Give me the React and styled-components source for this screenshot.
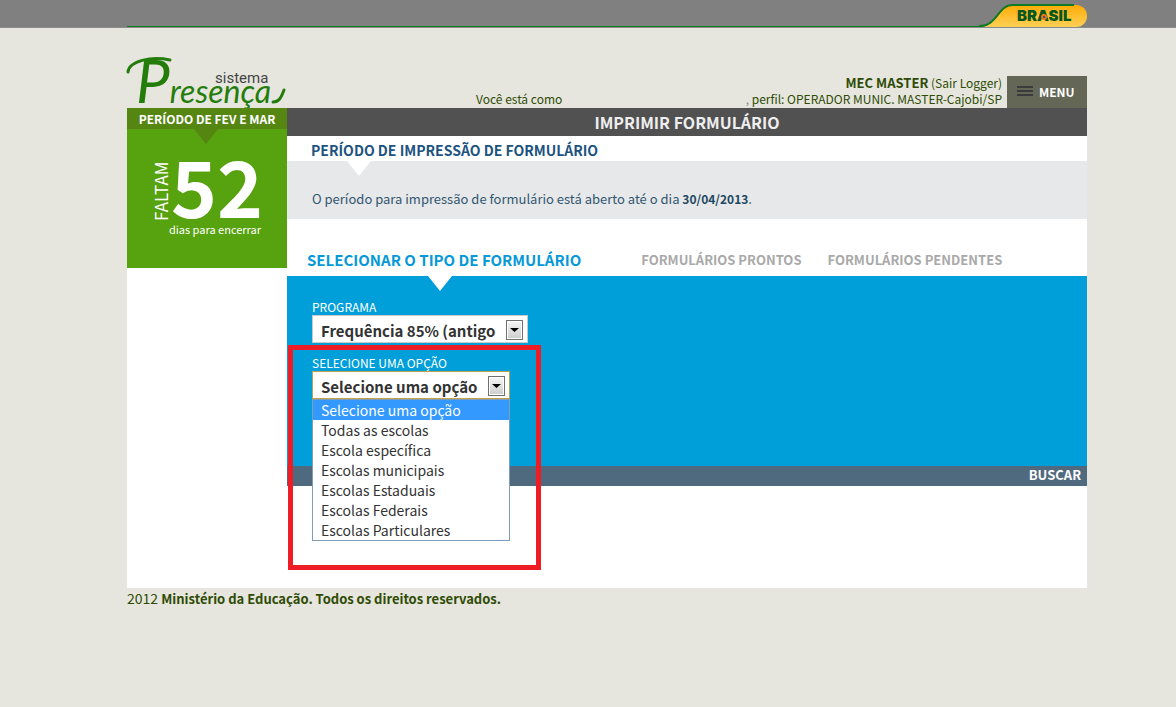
import { useState } from "react";
import styled, { createGlobalStyle } from "styled-components";

const options = [
    "Selecione uma opção",
    "Todas as escolas",
    "Escola específica",
    "Escolas municipais",
    "Escolas Estaduais",
    "Escolas Federais",
    "Escolas Particulares",
];

const GlobalStyle = createGlobalStyle`
    * {
        box-sizing: border-box;
    }
    body {
        margin: 0;
        background: #e6e6de;
        color: #2f4b05;
        font-family: "Noto Sans CJK JP", "Open Sans", sans-serif;
        font-size: 12px;
        line-height: 16px;
    }
    a {
        color: inherit;
        text-decoration: none;
    }
    button, select {
        font-family: inherit;
    }
`;

export default function App() {
    const [program, setProgram] = useState("Frequência 85% (antigo");
    const [option, setOption] = useState(options[0]);

    return (
        <>
            <GlobalStyle />
            <TopBar>
                <TopLine>
                    <BrasilBadge />
                </TopLine>
            </TopBar>
            <Page>
                <Header>
                    <Logo />
                    <Session>
                        <span>Você está como</span>
                        <User>
                            <div><strong>MEC MASTER</strong> <a href="#sair">(Sair Logger)</a></div>
                            <div><Comma>,</Comma> perfil: OPERADOR MUNIC. MASTER-Cajobi/SP</div>
                        </User>
                    </Session>
                    <MenuButton type="button">
                        <MenuIcon viewBox="0 0 16 10" aria-hidden="true">
                            <path d="M0 1h16M0 5h16M0 9h16" stroke="#3b3b3b" strokeWidth="2" />
                        </MenuIcon>
                        MENU
                    </MenuButton>
                </Header>
                <Body>
                    <Countdown>
                        <CountdownTitle>PERÍODO DE FEV E MAR</CountdownTitle>
                        <CountdownBox>
                            <Pointer $left={67} $color="#568612" />
                            <Counter>
                                <Remaining>FALTAM</Remaining>
                                <Days>52</Days>
                            </Counter>
                            <CounterNote>dias para encerrar</CounterNote>
                        </CountdownBox>
                    </Countdown>
                    <Main>
                        <PageTitle>IMPRIMIR FORMULÁRIO</PageTitle>
                        <PeriodTitle>PERÍODO DE IMPRESSÃO DE FORMULÁRIO</PeriodTitle>
                        <PeriodText>
                            <Pointer $left={60} $color="#fff" />
                            O período para impressão de formulário está aberto até o dia <strong>30/04/2013</strong>.
                        </PeriodText>
                        <Tabs>
                            <Tab href="#tipo" $active>SELECIONAR O TIPO DE FORMULÁRIO</Tab>
                            <Tab href="#prontos">FORMULÁRIOS PRONTOS</Tab>
                            <Tab href="#pendentes">FORMULÁRIOS PENDENTES</Tab>
                        </Tabs>
                        <Form onSubmit={(e) => e.preventDefault()}>
                            <Fields>
                                <Pointer $left={141} $color="#fff" />
                                <Field>
                                    <Label htmlFor="programa">PROGRAMA</Label>
                                    <SelectBox $width={216}>
                                        <Select id="programa" value={program} onChange={(e) => setProgram(e.target.value)}>
                                            <option>Frequência 85% (antigo</option>
                                        </Select>
                                        <SelectArrow />
                                    </SelectBox>
                                </Field>
                                <Field>
                                    <Highlight />
                                    <Label htmlFor="opcao">SELECIONE UMA OPÇÃO</Label>
                                    <SelectBox $width={198}>
                                        <Select id="opcao" $open value={option} onChange={(e) => setOption(e.target.value)}>
                                            {options.map((item) => <option key={item}>{item}</option>)}
                                        </Select>
                                        <SelectArrow />
                                        <OptionList role="listbox" aria-label="Selecione uma opção">
                                            {options.map((item) => (
                                                <Option
                                                    key={item}
                                                    role="option"
                                                    aria-selected={item === option}
                                                    $selected={item === option}
                                                    onClick={() => setOption(item)}
                                                >
                                                    {item}
                                                </Option>
                                            ))}
                                        </OptionList>
                                    </SelectBox>
                                </Field>
                            </Fields>
                            <Actions>
                                <SearchButton type="submit">BUSCAR</SearchButton>
                            </Actions>
                        </Form>
                    </Main>
                </Body>
                <Footer>
                    2012 <strong>Ministério da Educação. Todos os direitos reservados.</strong>
                </Footer>
            </Page>
        </>
    )
}

function BrasilBadge() {
    return (
        <BadgeSvg viewBox="0 0 108 24" role="img" aria-label="Brasil">
            <defs>
                <linearGradient id="gold" x1="0" y1="0" x2="0" y2="1">
                    <stop offset="0" stopColor="#fdab05" />
                    <stop offset="1" stopColor="#ffd057" />
                </linearGradient>
            </defs>
            <path d="M4 24C17 22 20 3 33 2H97C104 2 108 7 108 13S104 24 97 24Z" fill="url(#gold)" />
            <path d="M0 23C18 24 19 2 33 2H95" fill="none" stroke="#0b7a22" strokeWidth="2" />
            <text x="38" y="18" fontFamily="Inter, sans-serif" fontWeight="900" fontSize="15" fill="#07561d">BRASIL</text>
            <circle cx="65" cy="14" r="3" fill="#e8731c" />
            <circle cx="65" cy="14" r="1" fill="#174b9a" />
        </BadgeSvg>
    )
}

function Logo() {
    return (
        <LogoSvg viewBox="0 0 160 56" role="img" aria-label="Sistema Presença">
            <text x="88" y="31" fontFamily="Roboto, sans-serif" fontSize="15" fill="#444">sistema</text>
            <path d="M1 20C2 9 24 4 43 8" fill="none" stroke="#247d0b" strokeWidth="3" strokeLinecap="round" />
            <text x="9" y="51" fontFamily="Lato, sans-serif" fontStyle="italic" fill="#247d0b">
                <tspan fontSize="60">P</tspan>
                <tspan fontSize="32">resença</tspan>
            </text>
            <path d="M146 50C152 50 154 46 157 38" fill="none" stroke="#247d0b" strokeWidth="3" strokeLinecap="round" />
        </LogoSvg>
    )
}

function SelectArrow() {
    return (
        <ArrowBox viewBox="0 0 17 20" aria-hidden="true">
            <defs>
                <linearGradient id="arrowFill" x1="0" y1="0" x2="0" y2="1">
                    <stop offset="0" stopColor="#f4f4f4" />
                    <stop offset="1" stopColor="#cfcfcf" />
                </linearGradient>
            </defs>
            <rect x="0.500" y="0.500" width="16" height="19" fill="#fff" stroke="#707070" />
            <rect x="2" y="2" width="13" height="16" fill="url(#arrowFill)" />
            <path d="M4 8h9l-4.500 4z" fill="#000" />
        </ArrowBox>
    )
}

const TopBar = styled.div`
    height: 28px;
    padding: 0 89px 0 127px;
    background: #808080;
    border-bottom: 1px solid #8c8c8a;
`;
const TopLine = styled.div`
    display: flex;
    justify-content: flex-end;
    align-items: flex-end;
    height: 27px;
    background: linear-gradient(#0b7a22, #0b7a22) left bottom / calc(100% - 104px) 1px no-repeat;
`;
const BadgeSvg = styled.svg`
    display: block;
    width: 108px;
    height: 24px;
`;
const Page = styled.div`
    padding: 0 89px 0 127px;
`;
const Header = styled.header`
    display: flex;
    align-items: flex-end;
    height: 80px;
`;
const LogoSvg = styled.svg`
    flex: none;
    width: 160px;
    height: 56px;
    overflow: visible;
`;
const Session = styled.div`
    flex: 1;
    display: flex;
    align-items: flex-end;
    justify-content: space-between;
    padding: 0 5px 1px 189px;
`;
const User = styled.div`
    text-align: right;
    strong {
        font-size: 13px;
    }
`;
const Comma = styled.span`
    color: #7d8a96;
`;
const MenuButton = styled.button`
    display: flex;
    align-items: center;
    gap: 6px;
    width: 80px;
    height: 32px;
    padding: 0 0 2px 10px;
    border: 0;
    background: #646656;
    color: #fff;
    font-size: 12px;
    font-weight: bold;
    cursor: pointer;
`;
const MenuIcon = styled.svg`
    width: 16px;
    height: 10px;
`;
const Body = styled.div`
    display: grid;
    grid-template-columns: 160px 1fr;
    align-items: start;
    padding-bottom: 102px;
    background: #fff;
`;

const Countdown = styled.aside`
    color: #fff;
`;
const CountdownTitle = styled.h2`
    margin: 0;
    background: #568612;
    font-size: 12px;
    line-height: 21px;
    text-align: center;
`;
const CountdownBox = styled.div`
    position: relative;
    height: 139px;
    padding-top: 32px;
    background: #57a20f;
`;
const Counter = styled.div`
    display: flex;
    justify-content: center;
    height: 60px;
`;
const Remaining = styled.span`
    writing-mode: vertical-rl;
    transform: rotate(180deg);
    font-size: 17px;
    line-height: 20px;
    text-align: center;
`;
const Days = styled.span`
    font-size: 78px;
    font-weight: bold;
    line-height: 46px;
`;
const CounterNote = styled.div`
    padding-left: 16px;
    font-size: 11px;
    text-align: center;
`;
const Pointer = styled.span`
    position: absolute;
    top: 0;
    left: ${({ $left }) => $left}px;
    border: 12px solid transparent;
    border-top: 15px solid ${({ $color }) => $color};
    border-bottom: 0;
`;

const Main = styled.main`
    min-width: 0;
`;
const PageTitle = styled.h1`
    margin: 0;
    background: #515151;
    color: #eee;
    font-size: 16px;
    line-height: 28px;
    text-align: center;
`;
const PeriodTitle = styled.h2`
    margin: 0;
    padding: 4px 24px 0;
    color: #1d5380;
    font-size: 14px;
    line-height: 21px;
`;
const PeriodText = styled.p`
    position: relative;
    margin: 0;
    padding: 30px 25px 12px;
    background: #e7e8ea;
    color: #31566f;
    font-size: 13px;
    line-height: 16px;
    strong {
        color: #1f4862;
        font-size: 12px;
    }
`;
const Tabs = styled.nav`
    display: flex;
    align-items: center;
    gap: 26px;
    height: 57px;
    padding: 24px 20px 0;
`;
const Tab = styled.a`
    margin-right: ${({ $active }) => ($active ? 34 : 0)}px;
    color: ${({ $active }) => ($active ? "#0799d7" : "#a9a9a9")};
    font-size: ${({ $active }) => ($active ? 15 : 13)}px;
    font-weight: bold;
`;
const Form = styled.form`
    margin: 0;
`;
const Fields = styled.div`
    position: relative;
    display: flex;
    flex-direction: column;
    gap: 12px;
    min-height: 190px;
    padding: 23px 25px;
    background: #009fda;
`;
const Field = styled.div`
    position: relative;
`;
const Label = styled.label`
    display: block;
    color: #fff;
    font-size: 12px;
    line-height: 16px;
`;
const SelectBox = styled.div`
    position: relative;
    width: ${({ $width }) => $width}px;
`;
const Select = styled.select`
    display: block;
    width: 100%;
    height: 28px;
    padding: 2px 20px 0 8px;
    appearance: none;
    border: 1px solid ${({ $open }) => ($open ? "#c2a14d" : "#c9c9c9")};
    border-radius: 0;
    background: #fff;
    color: #333;
    font-size: 15px;
    font-weight: bold;
    outline: 0;
`;
const ArrowBox = styled.svg`
    position: absolute;
    top: 5px;
    right: 5px;
    width: 17px;
    height: 20px;
    pointer-events: none;
`;
const OptionList = styled.ul`
    position: absolute;
    z-index: 2;
    top: 28px;
    left: 0;
    width: 100%;
    margin: 0;
    padding: 0;
    border: 1px solid #7f9db9;
    background: #fff;
    list-style: none;
`;
const Option = styled.li`
    padding-left: 8px;
    background: ${({ $selected }) => ($selected ? "#3399ff" : "#fff")};
    color: ${({ $selected }) => ($selected ? "#fff" : "#333")};
    font-size: 14px;
    line-height: 20px;
    cursor: default;
`;
const Highlight = styled.div`
    position: absolute;
    z-index: 1;
    top: -10px;
    left: -24px;
    width: 253px;
    height: 225px;
    border: 5px solid #ee1c24;
    pointer-events: none;
`;
const Actions = styled.div`
    display: flex;
    align-items: flex-start;
    justify-content: flex-end;
    height: 20px;
    padding-right: 6px;
    background: #4f697f;
`;
const SearchButton = styled.button`
    padding: 0;
    border: 0;
    background: none;
    color: #fff;
    font-size: 13px;
    font-weight: bold;
    line-height: 18px;
    cursor: pointer;
`;
const Footer = styled.footer`
    font-size: 14px;
    line-height: 20px;
    strong {
        font-size: 13px;
    }
`;
